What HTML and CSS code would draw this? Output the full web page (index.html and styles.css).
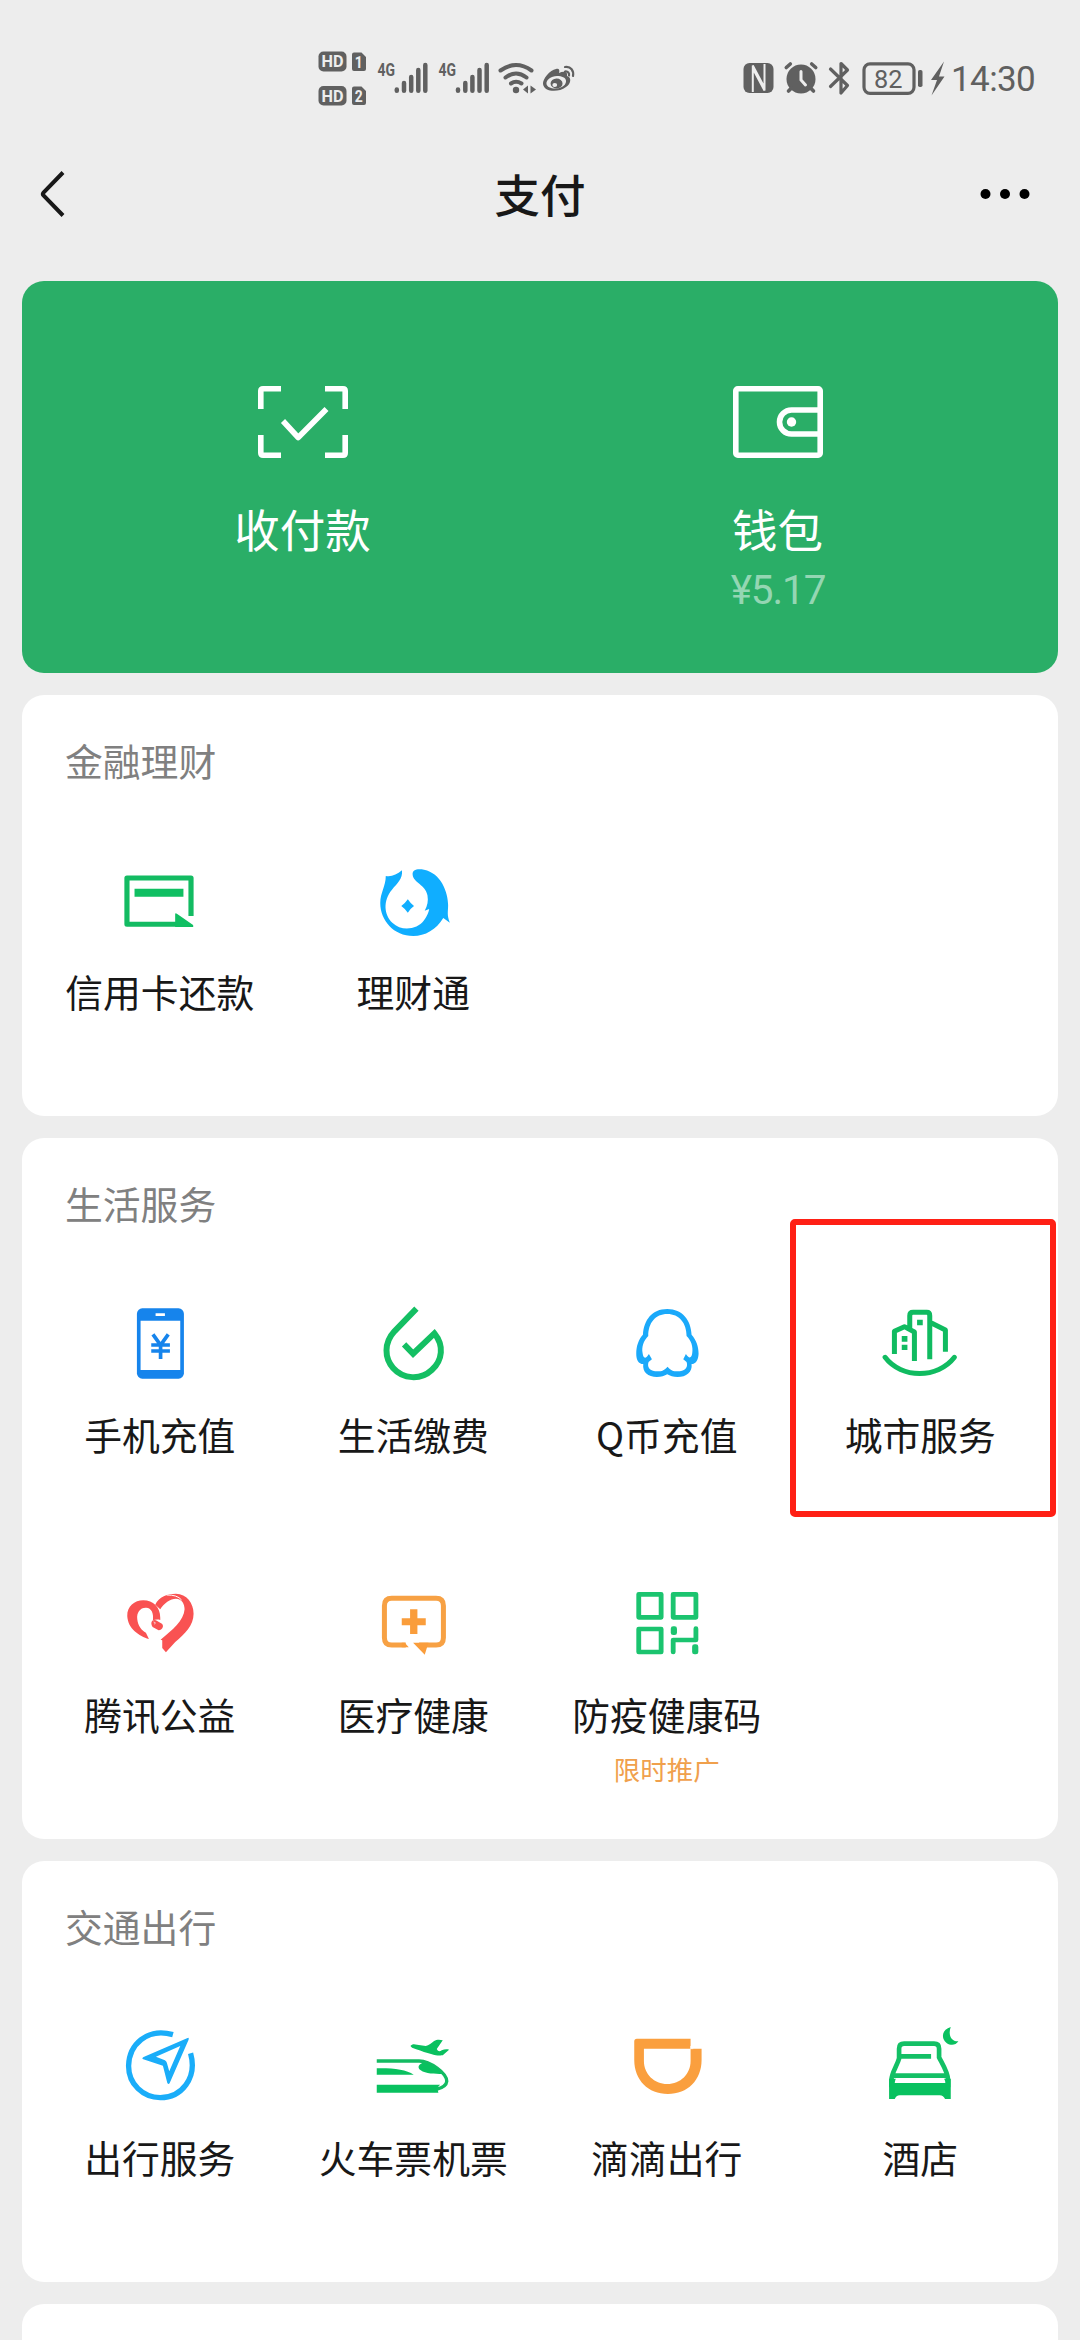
FILE: index.html
```html
<!DOCTYPE html>
<html lang="zh-CN">
<head>
<meta charset="utf-8">
<title>支付</title>
<link rel="stylesheet" href="styles.css">
</head>
<body>
<div class="screen">
  <div class="status">
    <svg class="status-left" width="265" height="60" viewBox="315 48 265 60">
      <g fill="#606060">
        <rect x="318.5" y="51.5" width="28" height="20" rx="5"/>
        <rect x="318.5" y="86" width="28" height="19.5" rx="5"/>
        <path d="M354 52.5h7.5l4.5 4.500v12q0 2-2 2h-10q-2 0-2-2v-14.500q0-2 2-2zM354 86.500h7.500l4.500 4.500v12q0 2-2 2h-10q-2 0-2-2v-14.500q0-2 2-2z"/>
      </g>
      <g class="badge-text">
        <text x="321.500" y="67.300" textLength="22" lengthAdjust="spacingAndGlyphs">HD</text>
        <text x="321.500" y="101.600" textLength="22" lengthAdjust="spacingAndGlyphs">HD</text>
        <text x="354.800" y="68" textLength="8" lengthAdjust="spacingAndGlyphs">1</text>
        <text x="354.800" y="102" textLength="8" lengthAdjust="spacingAndGlyphs">2</text>
      </g>
      <g class="net-text">
        <text x="377.500" y="76" textLength="17.500" lengthAdjust="spacingAndGlyphs">4G</text>
        <text x="438.500" y="76" textLength="17.500" lengthAdjust="spacingAndGlyphs">4G</text>
      </g>
      <g stroke="#606060" stroke-width="4.500" stroke-linecap="round" fill="none">
        <path d="M396.800 89.500v1.200M404 83v7.700M411.200 77v13.700M418.300 70v20.700M425.300 65v25.700"/>
        <path d="M458 89.500v1.200M465.300 83v7.700M472.400 77v13.700M479.500 70v20.700M486.700 65v25.700"/>
        <path d="M500.500 70.500q15.500-11 31 0M505.500 77.500q10.500-8 21 0M511 83.500q5-3.500 10.500 0" stroke-width="4"/>
      </g>
      <g fill="#606060">
        <circle cx="516" cy="90" r="3.200"/>
        <path d="M528 85.500v8l-5-4zM530.500 85.500l5.500 4-5.500 4z"/>
        <path fill-rule="evenodd" d="M556 69c3-1 4 1 3 4 4-2 9-2 8 3 5 1 4 8-1 11-8 6-22 5-23-3-.5-5 7-14 13-15zM557 76c-6 0-11 4-10.500 8 .5 3 5 5 10 4.500 6-.5 10-4 9.500-8-.5-3-4-4.500-9-4.500z"/>
        <path fill-rule="evenodd" d="M556.500 78.500a6 5 0 1 0 .1 10a6 5 0 1 0-.1-10zM554.800 83a2.400 2 0 1 1-.1 4a2.400 2 0 1 1 .1-4z"/>
      </g>
      <path d="M565 67c6-1 9 4 8 9M565 71.500c3-.5 4.500 2 4 4" fill="none" stroke="#606060" stroke-width="2.200" stroke-linecap="round"/>
    </svg>
    <svg class="status-right" width="206" height="60" viewBox="742 48 206 60">
      <rect x="743.500" y="63" width="30" height="30" rx="6" fill="#606060"/>
      <path d="M752.800 92V65.500L764.500 87.500M764.500 64V90.500L752.800 68.500" fill="none" stroke="#ededed" stroke-width="2"/>
      <circle cx="801" cy="79" r="14.500" fill="#606060"/>
      <path d="M786.300 67.500l4-3.500M815.700 67.500l-4-3.500M788.500 91l3-3M813.500 91l-3-3" stroke="#606060" stroke-width="3.600" stroke-linecap="round"/>
      <path d="M801 71.500v8.500l4.500 5" fill="none" stroke="#ededed" stroke-width="3" stroke-linecap="round"/>
      <path d="M830.500 69l17 16.500-6.500 7.500v-29.500l6.500 6.500-17 16.500" fill="none" stroke="#606060" stroke-width="3.200" stroke-linejoin="round" stroke-linecap="round"/>
      <rect x="864" y="63.800" width="50" height="29.500" rx="6" fill="none" stroke="#606060" stroke-width="3.200"/>
      <rect x="918" y="70" width="4.500" height="17" rx="1.800" fill="#606060"/>
      <text class="battery-text" x="874" y="87.800" textLength="28.500" lengthAdjust="spacingAndGlyphs">82</text>
      <path d="M944 61.500l-13 18.500h6l-5.500 15.500 13-19h-5.500z" fill="#606060"/>
    </svg>
    <span class="clock">14:30</span>
  </div>

  <header class="nav">
    <svg class="back" width="30" height="50" viewBox="0 0 30 50"><path d="M25 3.500L5.500 23.500q-1.300 1.500 0 3L25 46.500" fill="none" stroke="#181818" stroke-width="4"/></svg>
    <h1 class="title">支付</h1>
    <svg class="more" width="50" height="12" viewBox="0 0 50 12"><circle cx="5.500" cy="6" r="5"/><circle cx="25" cy="6" r="5"/><circle cx="44.500" cy="6" r="5"/></svg>
  </header>

  <main class="cards">
    <section class="wallet">
      <div class="wallet-item">
        <svg width="96" height="78" viewBox="0 0 96 78" fill="none" stroke="#fff" stroke-width="5.600">
          <path d="M5.800 26V8q0-2.200 2.200-2.200h18M70 5.800h18q2.200 0 2.200 2.200v18M90.200 52v18q0 2.200-2.200 2.200H70M26 72.200H8q-2.200 0-2.200-2.200V52"/>
          <path d="M28 38l15.200 16.500L71.500 26" stroke-linejoin="round"/>
        </svg>
        <span class="wallet-label">收付款</span>
      </div>
      <div class="wallet-item">
        <svg width="96" height="78" viewBox="0 0 96 78" fill="none" stroke="#fff" stroke-width="5.600">
          <rect x="5.800" y="5.800" width="84.400" height="66.400" rx="2"/>
          <path d="M90 27H61.500a12 12 0 0 0 0 24H90"/>
          <circle cx="61.500" cy="39" r="4.700" fill="#fff" stroke="none"/>
        </svg>
        <span class="wallet-label">钱包</span>
        <span class="wallet-amount">¥5.17</span>
      </div>
    </section>

    <section class="card">
      <h2 class="card-title">金融理财</h2>
      <div class="grid">
        <div class="tile">
          <svg class="icon" viewBox="342 537 243.900 252" preserveAspectRatio="none">
            <path d="M554 708V594H368V733H512" fill="none" stroke="#13bb62" stroke-width="15" stroke-linejoin="round"/>
            <path d="M390 626h142v24H390zM508 703q0-6 5-2l46 33q5 7-3 7h-48z" fill="#10bf62"/>
          </svg>
          <span class="label">信用卡还款</span>
        </div>
        <div class="tile">
          <svg class="icon" viewBox="1078.100 537 243.900 252" preserveAspectRatio="none" fill="#10aeff">
            <path d="M1121 588c17 3 32-4 47-17c3 25-14 40-29 58c-27 33-23 75 1 99c28 28 73 19 91-6c11-14 15-28 16-35l-13 5c8-14 11-29 8-46c-5-32-41-38-43-62c-2-15 14-19 33-15c49 10 70 67 70 107c0 20-4 29 5 52l-19-14c-20 35-53 54-87 54c-57 0-96-47-96-99c0-31 16-50 16-81z"/>
            <path d="M1185 658q6 10 18 20q-12 9-18 20q-7-11-19-20q12-9 19-20z"/>
          </svg>
          <span class="label">理财通</span>
        </div>
      </div>
    </section>

    <section class="card">
      <h2 class="card-title">生活服务</h2>
      <div class="grid">
        <div class="tile">
          <svg class="icon" viewBox="173.250 96 252 252">
            <rect x="230" y="115" width="141" height="211" rx="16" fill="#1684ec"/>
            <path d="M241 152h119v148H241zM286 130h28v8h-28z" fill="#fff"/>
            <path d="M278 193l23 32 23-32M273 225h56M273 243h56M301 225v42" fill="none" stroke="#1684ec" stroke-width="11"/>
          </svg>
          <span class="label">手机充值</span>
        </div>
        <div class="tile">
          <svg class="icon" viewBox="933.750 96 252 252" fill="none" stroke="#14bf63" stroke-width="18">
            <path d="M1070 116L1004 184C972 219 974 264 1000 294C1030 328 1083 331 1116 300C1149 270 1153 226 1124 190L1060 251L1033 223"/>
          </svg>
          <span class="label">生活缴费</span>
        </div>
        <div class="tile">
          <svg class="icon" viewBox="134.250 306 252 252">
            <path fill="#1aa9fa" fill-rule="evenodd" d="M261 327c46 0 71 34 73 77c14 16 21 35 21 57c-1 19-8 31-21 31c3 25-16 39-42 39c-13 0-23-3-31-8c-8 5-18 8-31 8c-27 0-44-15-41-39c-14 0-21-13-21-31c0-23 7-43 20-57c3-44 27-77 73-77zM261 342c-36 0-57 27-57 66c-15 15-20 34-17 51c2 18 10 18 19 3l9 16l-10 8c-6 18 6 28 27 28c13 0 20-3 30-14c9 11 17 14 30 14c20 0 33-10 27-28l-10-8l8-16c9 14 17 14 19-3c3-18-3-38-17-51c0-39-22-66-58-66z"/>
          </svg>
          <span class="label">Q币充值</span>
        </div>
        <div class="tile">
          <svg class="icon" viewBox="894.750 306 252 252" fill="none" stroke="#10bb60" stroke-width="15">
            <path d="M944 462V394L974 380L1004 396V483M990 388V347Q990 337 1000 337H1041Q1050 337 1050 347V478M1055 369L1097 390V455" stroke-linejoin="round"/>
            <path d="M916 472C965 537 1074 537 1124 472" stroke-linecap="round"/>
            <path d="M966 408h17v17h-17zM966 434h17v16h-17zM1012 359h17v17h-17z" fill="#10bb60" stroke="none"/>
          </svg>
          <span class="label">城市服务</span>
          <div class="highlight"></div>
        </div>
        <div class="tile">
          <svg class="icon" viewBox="173.250 66 252 252" fill="#f95252">
            <path d="M266 237C237 228 203 207 201 168C200 139 223 121 249 121C279 121 300 142 300 173V180C293 178 286 178 278 181C281 158 273 144 258 143C240 142 229 157 231 177C233 198 244 211 257 218z"/>
            <path d="M285 134C295 110 323 101 347 101C379 101 400 129 400 161C400 197 374 221 345 246L317 277L306 264V241L301 239C337 210 371 181 373 148C373 132 365 116 347 116C331 116 310 130 300 148z"/>
            <path d="M276 182q6-4 11-1l18 10q4 3 3 9q-3 10-13 11l-18-10q-7-12-1-19z"/>
            <path d="M319 105q32-1 45 15" fill="none" stroke="#fff" stroke-width="3"/>
            <path d="M280 186l5 2-2 5" fill="none" stroke="#fff" stroke-width="2"/>
          </svg>
          <span class="label">腾讯公益</span>
        </div>
        <div class="tile">
          <svg class="icon" viewBox="933.750 66 252 252">
            <path d="M1038 255H996Q974 255 974 233V137Q974 115 996 115H1129Q1151 115 1151 137V233Q1151 255 1129 255H1078" fill="none" stroke="#f7a144" stroke-width="15"/>
            <path d="M1026 175h25v-27h22v27h25v21h-25v26h-22v-26h-25zM1060 248h46l-11 36zM1026 248h9l12 14h-21z" fill="#fa9d3b"/>
          </svg>
          <span class="label">医疗健康</span>
        </div>
        <div class="tile">
          <svg class="icon" viewBox="246.100 66 243.900 252" preserveAspectRatio="none">
            <g fill="none" stroke="#1bc46f" stroke-width="14" stroke-linejoin="round">
              <rect x="286" y="103" width="65" height="69"/><rect x="386" y="103" width="66" height="69"/><rect x="286" y="207" width="65" height="69"/>
              <path d="M386 276V240H452V206" stroke-linecap="round"/>
            </g>
            <rect x="379" y="199" width="18" height="26" rx="7" fill="#1bc46f"/><rect x="441" y="253" width="18" height="30" rx="7" fill="#1bc46f"/>
          </svg>
          <span class="label">防疫健康码</span>
          <span class="promo">限时推广</span>
        </div>
      </div>
    </section>

    <section class="card">
      <h2 class="card-title">交通出行</h2>
      <div class="grid">
        <div class="tile">
          <svg class="icon" viewBox="173.250 405 252 252" fill="none" stroke="#1aadf9" stroke-width="16">
            <path d="M338 434C260 412 206 465 205 528C205 583 249 623 300 623C363 623 412 565 391 490"/>
            <path fill="#1aadf9" fill-rule="evenodd" stroke="none" d="M382 444q5-3 3 5L328 580q-4 5-7-2L308 527L249 508q-6-3 1-7zM360 468L287 500l27 11q5 3 6 8l7 25z"/>
          </svg>
          <span class="label">出行服务</span>
        </div>
        <div class="tile">
          <svg class="icon" viewBox="933.750 405 252 252" fill="#09c15f">
            <path d="M951 513H1078C1111 514 1161 549 1161 574C1160 586 1147 594 1130 598" fill="none" stroke="#13bb62" stroke-width="10"/>
            <path d="M951 535c50-1 88 4 111 19H951zM951 584h190q-12 9-5 24H951zM1090 518c27 2 46 20 58 34c-22 0-51 0-65-11c-13-10-4-20 7-23zM1052 468c5-7 12-6 20-4l26 4c9-2 18-9 25-15c8-5 17-5 26-2l-18 26c4 7 8 9 15 4c7-3 14-5 22-2l-19 17c-23 3-55-10-92-23z"/>
          </svg>
          <span class="label">火车票机票</span>
        </div>
        <div class="tile">
          <svg class="icon" viewBox="194.250 75 252 252" fill="#fa9f3e">
            <path d="M230 116H391V146H424V180C424 240 382 282 323 282C264 282 222 240 222 180V124Q222 116 230 116zM251 146V183C251 222 282 252 321 252C361 252 391 222 391 183V146z" fill-rule="evenodd"/>
            <path d="M391 138v8h8" fill="none" stroke="#fff" stroke-width="2"/>
          </svg>
          <span class="label">滴滴出行</span>
        </div>
        <div class="tile">
          <svg class="icon" viewBox="954.750 75 252 252">
            <path d="M1018 178V146Q1018 131 1033 131H1123Q1138 131 1138 146V172C1150 195 1165 218 1165 240V262M995 262V240C996 215 1012 200 1020 169H1114M1001 227H1160" fill="none" stroke="#13c065" stroke-width="14"/>
            <path d="M988 236h20q-3 8-3 13h152q0-7-4-13h20v61h-17q-5-10-16-11h-120q-11 1-15 11h-17zM1173 81c-19 6-27 20-22 35c7 19 33 26 45 8c-24 1-31-22-23-43z" fill="#09c15f"/>
          </svg>
          <span class="label">酒店</span>
        </div>
      </div>
    </section>

    <section class="card card-next"></section>
  </main>
</div>
</body>
</html>
```
FILE: styles.css
```css
* {
  box-sizing: border-box;
}

body {
  margin: 0;
  background: #ededed;
  color: #181818;
  font-family: "Noto Sans CJK SC", "Noto Sans", sans-serif;
}

.screen {
  width: 1080px;
  height: 2340px;
  overflow: hidden;
}

svg {
  display: block;
  flex: none;
}

.status {
  height: 110px;
  padding: 48px 0 0 315px;
  display: flex;
}

.status-right {
  margin-left: 162px;
}

.badge-text {
  font: 700 17px "Roboto", sans-serif;
  fill: #ededed;
}

.net-text {
  font: 700 18px "Roboto", sans-serif;
  fill: #606060;
}

.battery-text {
  font: 400 26.5px "Roboto", sans-serif;
  fill: #606060;
}

.clock {
  margin-left: 3px;
  font: 400 35px/64px "Roboto", sans-serif;
  letter-spacing: -0.6px;
  color: #606060;
}

.nav {
  height: 171px;
  padding: 0 50px 0 38px;
  display: flex;
  align-items: center;
  justify-content: space-between;
}

.back {
  margin-top: -3px;
}

.title {
  margin: -5px 0 0 32px;
  font-size: 45.5px;
  font-weight: 500;
  line-height: 60px;
}

.more {
  margin-top: -3px;
}

.cards {
  padding: 0 22px;
  display: flex;
  flex-direction: column;
  gap: 22px;
}

.wallet {
  height: 392px;
  padding: 102px 43px 0;
  display: grid;
  grid-template-columns: 1fr 1fr;
  border-radius: 22px;
  background: #2aae67;
  color: #fff;
}

.wallet-item {
  display: flex;
  flex-direction: column;
  align-items: center;
}

.wallet-label {
  margin-top: 40px;
  font-size: 45.5px;
  line-height: 54px;
}

.wallet-amount {
  margin-top: 10px;
  padding-left: 1px;
  font: 400 40.5px/50px "Roboto", sans-serif;
  letter-spacing: -1.1px;
  color: #94d6b3;
}

.card {
  border-radius: 22px;
  background: #fff;
}

.card-title {
  height: 141px;
  margin: 0;
  padding: 40px 43px 0;
  font-size: 37.8px;
  font-weight: 400;
  line-height: 50px;
  color: #808080;
}

.grid {
  padding: 0 11px;
  display: grid;
  grid-template-columns: repeat(4, 1fr);
  grid-auto-rows: 280px;
}

.tile {
  position: relative;
  padding-top: 23px;
  display: flex;
  flex-direction: column;
  align-items: center;
}

.icon {
  width: 84px;
  height: 84px;
}

.label {
  margin-top: 26px;
  font-size: 37.8px;
  line-height: 44px;
  white-space: nowrap;
}

.promo {
  margin-top: 17px;
  font-size: 26.5px;
  line-height: 32px;
  color: #f0a04c;
}

.highlight {
  position: absolute;
  left: -4px;
  top: -60px;
  width: 266px;
  height: 298px;
  border: 6px solid #ff2015;
  border-radius: 5px;
}

.card-next {
  height: 60px;
}
```
